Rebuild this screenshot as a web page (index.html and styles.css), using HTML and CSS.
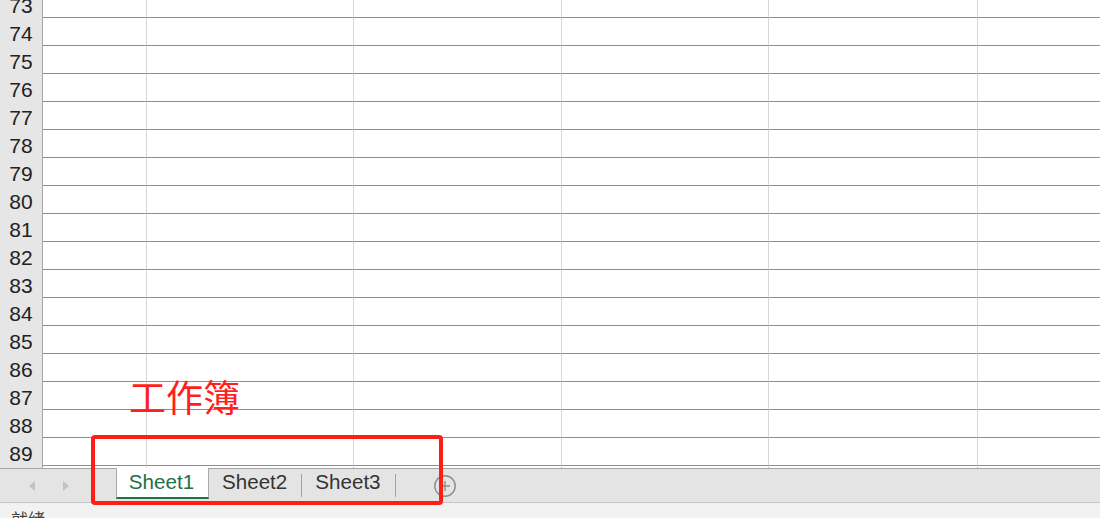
FILE: index.html
```html
<!DOCTYPE html>
<html>

<head>
    <meta charset="UTF-8">
    <link rel="stylesheet" href="styles.css">
</head>

<body>
    <div class="sheet">
        <div class="rows">
            <div class="row"><div class="rh">73</div><div class="c"></div><div class="c"></div><div class="c"></div><div class="c"></div><div class="c"></div><div class="c"></div></div>
            <div class="row"><div class="rh">74</div><div class="c"></div><div class="c"></div><div class="c"></div><div class="c"></div><div class="c"></div><div class="c"></div></div>
            <div class="row"><div class="rh">75</div><div class="c"></div><div class="c"></div><div class="c"></div><div class="c"></div><div class="c"></div><div class="c"></div></div>
            <div class="row"><div class="rh">76</div><div class="c"></div><div class="c"></div><div class="c"></div><div class="c"></div><div class="c"></div><div class="c"></div></div>
            <div class="row"><div class="rh">77</div><div class="c"></div><div class="c"></div><div class="c"></div><div class="c"></div><div class="c"></div><div class="c"></div></div>
            <div class="row"><div class="rh">78</div><div class="c"></div><div class="c"></div><div class="c"></div><div class="c"></div><div class="c"></div><div class="c"></div></div>
            <div class="row"><div class="rh">79</div><div class="c"></div><div class="c"></div><div class="c"></div><div class="c"></div><div class="c"></div><div class="c"></div></div>
            <div class="row"><div class="rh">80</div><div class="c"></div><div class="c"></div><div class="c"></div><div class="c"></div><div class="c"></div><div class="c"></div></div>
            <div class="row"><div class="rh">81</div><div class="c"></div><div class="c"></div><div class="c"></div><div class="c"></div><div class="c"></div><div class="c"></div></div>
            <div class="row"><div class="rh">82</div><div class="c"></div><div class="c"></div><div class="c"></div><div class="c"></div><div class="c"></div><div class="c"></div></div>
            <div class="row"><div class="rh">83</div><div class="c"></div><div class="c"></div><div class="c"></div><div class="c"></div><div class="c"></div><div class="c"></div></div>
            <div class="row"><div class="rh">84</div><div class="c"></div><div class="c"></div><div class="c"></div><div class="c"></div><div class="c"></div><div class="c"></div></div>
            <div class="row"><div class="rh">85</div><div class="c"></div><div class="c"></div><div class="c"></div><div class="c"></div><div class="c"></div><div class="c"></div></div>
            <div class="row"><div class="rh">86</div><div class="c"></div><div class="c"></div><div class="c"></div><div class="c"></div><div class="c"></div><div class="c"></div></div>
            <div class="row"><div class="rh">87</div><div class="c"></div><div class="c"></div><div class="c"></div><div class="c"></div><div class="c"></div><div class="c"></div></div>
            <div class="row"><div class="rh">88</div><div class="c"></div><div class="c"></div><div class="c"></div><div class="c"></div><div class="c"></div><div class="c"></div></div>
            <div class="row"><div class="rh">89</div><div class="c"></div><div class="c"></div><div class="c"></div><div class="c"></div><div class="c"></div><div class="c"></div></div>
            <!-- next row only peeks out under 89 -->
            <div class="row"><div class="rh"></div><div class="c"></div><div class="c"></div><div class="c"></div><div class="c"></div><div class="c"></div><div class="c"></div></div>
        </div>
    </div>

    <div class="tabbar">
        <div class="nav">
            <span class="arrow_l"></span>
            <span class="arrow_r"></span>
        </div>
        <div class="tab active">Sheet1</div>
        <div class="tab">Sheet2</div>
        <span class="sep"></span>
        <div class="tab">Sheet3</div>
        <span class="sep"></span>
        <svg class="add" width="22" height="22" viewBox="0 0 22 22">
            <circle cx="11" cy="11" r="10.2" fill="none" stroke="#8c8c8c" stroke-width="1.4" />
            <path d="M11 6v10M6 11h10" stroke="#8c8c8c" stroke-width="1.4" fill="none" />
        </svg>
    </div>

    <div class="status">就绪</div>

    <!-- annotation over the screenshot -->
    <div class="note">工作簿</div>
    <div class="mark"></div>
</body>

</html>
```

FILE: styles.css
```css
body {
    margin: 0;
    padding: 0;
    position: relative;
    width: 1100px;
    height: 518px;
    overflow: hidden;
    background-color: #ffffff;
    font-family: "Liberation Sans", Arial, "Noto Sans CJK SC", sans-serif;
}

.sheet {
    height: 468px;
    overflow: hidden;
}

.rows {
    margin-top: -10px;
}

.row {
    display: grid;
    grid-template-columns: 43px 104px 207px 208px 207px 209px 1fr;
    height: 28px;
}

.row .rh {
    box-sizing: border-box;
    height: 28px;
    padding-top: 2px;
    line-height: 27px;
    text-align: center;
    font-size: 21px;
    color: #222222;
    background-color: #e6e6e6;
    border-right: 1px solid #a6a6a6;
}

.row .c {
    box-sizing: border-box;
    height: 28px;
    border-right: 1px solid #d6d6d6;
    border-bottom: 1px solid #7ba35b;
}

.row .c:last-child {
    border-right: none;
}

.tabbar {
    display: flex;
    box-sizing: border-box;
    height: 35px;
    background-color: #e4e4e4;
    border-top: 1px solid #a6a6a6;
    border-bottom: 1px solid #c6c6c6;
}

.tabbar .nav {
    display: flex;
    align-items: center;
    gap: 28px;
    box-sizing: border-box;
    width: 116px;
    padding-left: 29px;
}

.arrow_l {
    width: 0;
    height: 0;
    border-top: 5.5px solid transparent;
    border-bottom: 5.5px solid transparent;
    border-right: 6px solid #c2c2c2;
}

.arrow_r {
    width: 0;
    height: 0;
    border-top: 5.5px solid transparent;
    border-bottom: 5.5px solid transparent;
    border-left: 6px solid #c2c2c2;
}

.tabbar .tab {
    padding: 1px 14px 0 13px;
    line-height: 23px;
    font-size: 20.6px;
    color: #333333;
}

.tabbar .tab.active {
    box-sizing: border-box;
    width: 93px;
    height: 31px;
    margin-top: -1px;
    padding: 2px 2px 0 0;
    text-align: center;
    color: #1e7145;
    background-color: #ffffff;
    border-left: 1px solid #a8a8a8;
    border-right: 1px solid #a8a8a8;
    border-bottom: 2px solid #217346;
}

.tabbar .sep {
    width: 1px;
    height: 23px;
    margin-top: 5px;
    background-color: #a3a3a3;
}

.tabbar .add {
    margin: 6px 0 0 38px;
}

.status {
    height: 16px;
    overflow: hidden;
    padding: 6px 0 0 11px;
    box-sizing: content-box;
    font-family: "Noto Sans CJK SC", sans-serif;
    font-size: 17px;
    line-height: 20px;
    color: #444444;
    background-color: #f2f2f2;
}

.note {
    position: absolute;
    left: 129px;
    top: 378px;
    font-family: "Noto Sans CJK SC", sans-serif;
    font-size: 37px;
    line-height: 1;
    color: #ff1f1f;
}

.mark {
    position: absolute;
    left: 91px;
    top: 435px;
    width: 344px;
    height: 62px;
    border: 4px solid #ff1e14;
    border-radius: 4px;
}
```
